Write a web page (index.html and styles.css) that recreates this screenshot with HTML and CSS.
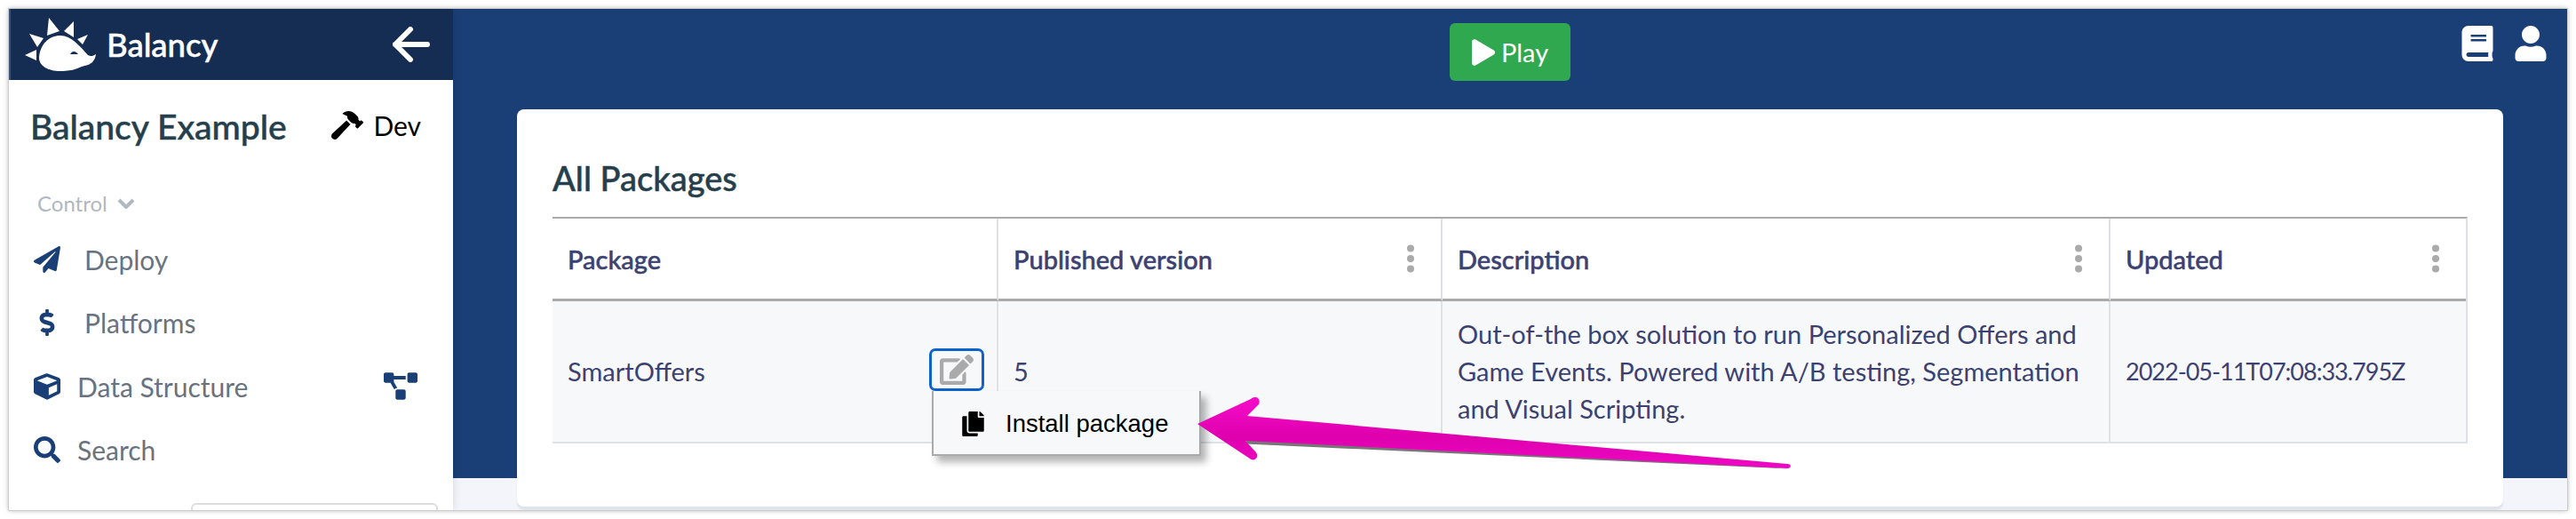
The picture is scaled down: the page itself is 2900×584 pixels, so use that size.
FILE: index.html
```html
<!DOCTYPE html>
<html lang="en">
<head>
    <meta charset="UTF-8">
    <title>Balancy - All Packages</title>
    <link rel="stylesheet" href="styles.css">
</head>
<body>
    <div class="window">
        <aside class="sidebar">
            <div class="brand">
                <svg class="logo" viewBox="28 18 80 60">
                    <path d="M55 18L67 33L53 38ZM83 22L83 40L72 33ZM99 37L93 48L87 42ZM33 36L49 41L42 51ZM28 60L41 54L41 66Z"/>
                    <path fill-rule="evenodd" d="M44 63C45 48 55 38 68 38C80 38 90 50 99 60C102 62 105 61 108 59C107 67 102 71 95 72C88 74 84 78 68 78C54 78 44 72 44 63ZM79 59C81 55 85 55 88 59Z"/>
                </svg>
                <span class="brand-name">Balancy</span>
                <svg class="back" viewBox="0 0 42 40"><path d="M20 3L3 20L20 37M3 20H39"/></svg>
            </div>
            <div class="project">
                <h2>Balancy Example</h2>
                <div class="env">
                    <svg class="icon-hammer" viewBox="0 0 576 512"><path d="M571.31 193.94l-22.63-22.63c-6.25-6.25-16.38-6.25-22.63 0l-11.31 11.31-28.9-28.9c5.63-21.31.36-44.9-16.35-61.61l-45.25-45.25c-62.48-62.48-163.79-62.48-226.28 0l90.51 45.25v18.75c0 16.97 6.74 33.25 18.75 45.25l49.14 49.14c16.71 16.71 40.3 21.98 61.61 16.35l28.9 28.9-11.31 11.31c-6.25 6.25-6.25 16.38 0 22.63l22.63 22.63c6.25 6.25 16.38 6.25 22.63 0l90.51-90.51c6.23-6.24 6.23-16.37-.01-22.62zm-286.72-15.2c-3.7-3.7-6.84-7.79-9.85-11.95L19.64 404.96c-25.57 23.88-26.26 64.19-1.53 88.93s65.05 24.05 88.93-1.53l238.13-255.07c-3.96-2.91-7.9-5.87-11.44-9.41l-49.14-49.14z"/></svg>
                    <span>Dev</span>
                </div>
            </div>
            <div class="nav-title">Control
                <svg class="chevron" viewBox="0 0 20 12"><path d="M2 2L10 10L18 2"/></svg>
            </div>
            <nav class="nav">
                <a class="nav-item">
                    <svg class="nav-icon" viewBox="0 0 512 512"><path d="M476 3.2L12.5 270.6c-18.1 10.4-15.8 35.6 2.2 43.2L121 358.4l287.3-253.2c5.5-4.9 13.3 2.6 8.6 8.3L176 407v80.5c0 23.6 28.5 32.9 42.5 15.8L282 426l124.6 52.2c14.2 6 30.4-2.9 33-18.2l72-432C515 7.8 493.3-6.8 476 3.2z"/></svg>
                    <span class="nav-label wide">Deploy</span>
                </a>
                <a class="nav-item">
                    <svg class="nav-icon" viewBox="-112 0 512 512"><path d="M209.2 233.4l-108-31.6C88.7 198.2 80 186.5 80 173.5c0-16.3 13.2-29.5 29.5-29.5h66.3c12.2 0 24.2 3.7 34.2 10.5 6.1 4.1 14.3 3.1 19.5-2l34.8-34c7.1-6.9 6.1-18.4-1.8-24.5C238 74.8 207.4 64.1 176 64V16c0-8.8-7.2-16-16-16h-32c-8.8 0-16 7.2-16 16v48h-2.5C45.8 64-5.4 118.7.5 183.6c4.2 46.1 39.4 83.6 83.8 96.6l102.5 30c12.5 3.7 21.2 15.3 21.2 28.3 0 16.3-13.2 29.5-29.5 29.5h-66.3C100 368 88 364.3 78 357.5c-6.1-4.1-14.3-3.1-19.5 2l-34.8 34c-7.1 6.9-6.1 18.4 1.8 24.5 24.5 19.2 55.1 29.9 86.5 30v48c0 8.8 7.2 16 16 16h32c8.8 0 16-7.2 16-16v-48.2c46.6-.9 90.3-28.6 105.7-72.7 21.5-61.6-14.6-124.8-72.5-141.7z"/></svg>
                    <span class="nav-label wide">Platforms</span>
                </a>
                <a class="nav-item">
                    <svg class="nav-icon" viewBox="0 0 512 512"><path d="M239.1 6.3l-208 78c-18.7 7-31.1 25-31.1 45v225.1c0 18.2 10.3 34.8 26.5 42.9l208 104c13.5 6.8 29.4 6.8 42.9 0l208-104c16.3-8.1 26.5-24.8 26.5-42.9V129.3c0-20-12.4-37.9-31.1-44.9l-208-78C262 2.2 250 2.2 239.1 6.3zM256 68.4l192 72v1.1l-192 78-192-78v-1.1l192-72zm32 356V275.5l160-65v133.9l-160 80z"/></svg>
                    <span class="nav-label">Data Structure</span>
                    <svg class="nav-extra" viewBox="0 0 640 512"><path d="M384 320H256c-17.67 0-32 14.33-32 32v128c0 17.67 14.33 32 32 32h128c17.67 0 32-14.33 32-32V352c0-17.67-14.33-32-32-32zM192 32c0-17.67-14.33-32-32-32H32C14.33 0 0 14.33 0 32v128c0 17.67 14.33 32 32 32h95.72l73.16 128.04C211.98 300.98 232.4 288 256 288h.28L192 175.51V128h224V64H192V32zM608 0H480c-17.67 0-32 14.33-32 32v128c0 17.67 14.33 32 32 32h128c17.67 0 32-14.33 32-32V32c0-17.67-14.33-32-32-32z"/></svg>
                </a>
                <a class="nav-item">
                    <svg class="nav-icon" viewBox="0 0 512 512"><path d="M505 442.7L405.3 343c-4.5-4.5-10.6-7-17-7H372c27.6-35.3 44-79.7 44-128C416 93.1 322.9 0 208 0S0 93.1 0 208s93.1 208 208 208c48.3 0 92.7-16.4 128-44v16.3c0 6.4 2.5 12.5 7 17l99.7 99.7c9.4 9.4 24.6 9.4 33.9 0l28.3-28.3c9.4-9.4 9.4-24.6.1-34zM208 336c-70.7 0-128-57.2-128-128 0-70.7 57.2-128 128-128 70.7 0 128 57.2 128 128 0 70.7-57.2 128-128 128z"/></svg>
                    <span class="nav-label">Search</span>
                </a>
            </nav>
            <div class="side-box"></div>
        </aside>

        <main class="main">
            <div class="topbar">
                <button class="play-btn">
                    <svg class="play-icon" viewBox="0 0 448 512"><path d="M424.4 214.7L72.4 6.6C43.8-10.3 0 6.1 0 47.9V464c0 37.5 40.7 60.1 72.4 41.3l352-208c31.4-18.5 31.5-64.1 0-82.6z"/></svg>
                    Play
                </button>
                <div class="top-icons">
                    <svg class="top-icon" viewBox="0 0 448 512"><path d="M448 360V24c0-13.3-10.7-24-24-24H96C43 0 0 43 0 96v320c0 53 43 96 96 96h328c13.3 0 24-10.7 24-24v-16c0-7.5-3.5-14.3-8.9-18.7-4.2-15.4-4.2-59.3 0-74.7 5.4-4.3 8.9-11.1 8.9-18.6zM128 134c0-3.3 2.7-6 6-6h212c3.3 0 6 2.7 6 6v20c0 3.3-2.7 6-6 6H134c-3.3 0-6-2.7-6-6v-20zm0 64c0-3.3 2.7-6 6-6h212c3.3 0 6 2.7 6 6v20c0 3.3-2.7 6-6 6H134c-3.3 0-6-2.7-6-6v-20zm253.4 250H96c-17.7 0-32-14.3-32-32 0-17.6 14.4-32 32-32h285.4c-1.9 17.1-1.9 46.9 0 64z"/></svg>
                    <svg class="top-icon" viewBox="0 0 448 512"><path d="M224 256c70.7 0 128-57.3 128-128S294.7 0 224 0 96 57.3 96 128s57.3 128 128 128zm89.6 32h-16.7c-22.2 10.2-46.9 16-72.9 16s-50.6-5.8-72.9-16h-16.7C60.2 288 0 348.2 0 422.4V464c0 26.5 21.5 48 48 48h352c26.5 0 48-21.5 48-48v-41.6c0-74.2-60.2-134.4-134.4-134.4z"/></svg>
                </div>
            </div>

            <section class="card">
                <h3>All Packages</h3>
                <div class="table">
                    <div class="th"><span>Package</span></div>
                    <div class="th"><span>Published version</span>
                        <svg class="kebab" viewBox="0 0 10 36"><circle cx="5" cy="5" r="4.5"/><circle cx="5" cy="18" r="4.5"/><circle cx="5" cy="31" r="4.5"/></svg>
                    </div>
                    <div class="th"><span>Description</span>
                        <svg class="kebab" viewBox="0 0 10 36"><circle cx="5" cy="5" r="4.5"/><circle cx="5" cy="18" r="4.5"/><circle cx="5" cy="31" r="4.5"/></svg>
                    </div>
                    <div class="th"><span>Updated</span>
                        <svg class="kebab" viewBox="0 0 10 36"><circle cx="5" cy="5" r="4.5"/><circle cx="5" cy="18" r="4.5"/><circle cx="5" cy="31" r="4.5"/></svg>
                    </div>

                    <div class="td name-cell">
                        <span>SmartOffers</span>
                        <div class="actions">
                            <button class="edit-btn">
                                <svg viewBox="0 0 576 512"><path d="M402.6 83.2l90.2 90.2c3.8 3.8 3.8 10 0 13.8L274.4 405.6l-92.8 10.3c-12.4 1.4-22.9-9.1-21.5-21.5l10.3-92.8L388.8 83.2c3.8-3.8 10-3.8 13.8 0zm162-22.9l-48.8-48.8c-15.2-15.2-39.9-15.2-55.2 0l-35.4 35.4c-3.8 3.8-3.8 10 0 13.8l90.2 90.2c3.8 3.8 10 3.8 13.8 0l35.4-35.4c15.2-15.3 15.2-40 0-55.2zM384 346.2V448H64V128h229.8c3.2 0 6.2-1.3 8.5-3.5l40-40c7.6-7.6 2.2-20.5-8.5-20.5H48C21.5 64 0 85.5 0 112v352c0 26.5 21.5 48 48 48h352c26.5 0 48-21.5 48-48V306.2c0-10.7-12.9-16-20.5-8.5l-40 40c-2.2 2.3-3.5 5.3-3.5 8.5z"/></svg>
                            </button>
                            <div class="menu">
                                <svg class="copy-icon" viewBox="0 0 448 512"><path d="M320 448v40c0 13.255-10.745 24-24 24H24c-13.255 0-24-10.745-24-24V120c0-13.255 10.745-24 24-24h72v296c0 30.879 25.121 56 56 56h168zm0-344V0H152c-13.255 0-24 10.745-24 24v368c0 13.255 10.745 24 24 24h272c13.255 0 24-10.745 24-24V128H344c-13.2 0-24-10.8-24-24zm120.971-31.029L375.029 7.029A24 24 0 0 0 358.059 0H352v96h96v-6.059a24 24 0 0 0-7.029-16.97z"/></svg>
                                <span>Install package</span>
                            </div>
                        </div>
                    </div>
                    <div class="td">5</div>
                    <div class="td">Out-of-the box solution to run Personalized Offers and Game Events. Powered with A/B testing, Segmentation and Visual Scripting.</div>
                    <div class="td date">2022-05-11T07:08:33.795Z</div>
                </div>
            </section>
        </main>

        <!-- screenshot annotation -->
        <svg class="callout" viewBox="10 10 2880 564">
            <defs>
                <linearGradient id="pink" x1="0" y1="0" x2="0" y2="1">
                    <stop offset="0" stop-color="#f70ccb"/>
                    <stop offset="0.55" stop-color="#de01ad"/>
                    <stop offset="1" stop-color="#ee08c4"/>
                </linearGradient>
            </defs>
            <path fill="#777" d="M1404 470L2015 526L1402 498Z" transform="translate(0 1.5)"/>
            <path fill="url(#pink)" d="M1348 477L1408 449C1414 444 1420 449 1417 455L1404 468L2012 522C2017 522 2017 527 2012 527L1402 496L1414 509C1418 515 1412 520 1407 516Z"/>
        </svg>
    </div>
</body>
</html>
```

FILE: styles.css
```css
/* General Styling */
body {
    margin: 0;
    background: #fff;
    font-family: 'Lato', sans-serif;
}

.window {
    position: relative;
    display: flex;
    height: 564px;
    margin: 10px;
    overflow: hidden;
    outline: 1px solid #ccc;
    box-shadow: 0 0 6px rgba(0, 0, 0, 0.35);
}

/* Sidebar */
.sidebar {
    position: relative;
    z-index: 1;
    flex: 0 0 500px;
    background: #fff;
    box-shadow: 0 0 10px rgba(0, 0, 0, 0.12);
}

.brand {
    display: flex;
    align-items: center;
    height: 80px;
    padding: 0 26px 0 16px;
    background: #152d53;
    border-left: 2px solid #3d5477;
    color: #fff;
}

.logo {
    width: 80px;
    height: 60px;
    fill: #fff;
}

.brand-name {
    margin-left: 12px;
    font-size: 36.5px;
    font-weight: 500;
    -webkit-text-stroke: 0.5px #fff;
}

.back {
    width: 42px;
    height: 40px;
    margin-left: auto;
    fill: none;
    stroke: #fff;
    stroke-width: 6;
    stroke-linecap: round;
    stroke-linejoin: round;
}

.project {
    display: flex;
    align-items: center;
    justify-content: space-between;
    padding: 26px 36px 0 24px;
    height: 52px;
}

.project h2 {
    margin: 0;
    font-size: 39px;
    font-weight: 500;
    color: #263f4d;
    -webkit-text-stroke: 0.5px #263f4d;
}

.env {
    display: flex;
    align-items: center;
    gap: 11px;
    margin-top: -2px;
    font-size: 30px;
    color: #000;
}

.icon-hammer {
    width: 36px;
    height: 32px;
}

.nav-title {
    display: flex;
    align-items: center;
    gap: 11px;
    margin: 46px 0 0 32px;
    font-size: 24px;
    color: #b0b8c1;
}

.chevron {
    width: 20px;
    height: 12px;
    fill: none;
    stroke: #b0b8c1;
    stroke-width: 4;
}

.nav {
    margin-top: 13px;
}

.nav-item {
    display: flex;
    align-items: center;
    height: 71.5px;
    padding: 0 40px 0 28px;
    font-size: 30px;
    color: #68737f;
}

.nav-icon {
    flex: none;
    width: 30px;
    height: 30px;
    fill: #1a3f76;
}

.nav-label {
    margin-left: 19px;
}

.nav-label.wide {
    margin-left: 27px;
}

.nav-extra {
    width: 38px;
    height: 31px;
    margin-left: auto;
    fill: #1a3f76;
}

.side-box {
    width: 274px;
    height: 30px;
    margin: 24px 0 0 205px;
    border: 2px solid #ddd;
    border-radius: 6px;
}

/* Main area */
.main {
    flex: 1;
    display: flex;
    flex-direction: column;
    background: linear-gradient(#1a3f76 528px, #f3f5fa 528px);
}

.topbar {
    position: relative;
    display: flex;
    justify-content: center;
    height: 113px;
    padding-top: 16px;
    box-sizing: border-box;
}

.play-btn {
    display: flex;
    align-items: center;
    justify-content: center;
    gap: 7px;
    width: 136px;
    height: 65px;
    border: none;
    border-radius: 6px;
    background: #2fa84f;
    color: #fff;
    font-family: inherit;
    font-size: 29px;
}

.play-icon {
    width: 26px;
    height: 30px;
    fill: #fff;
}

.top-icons {
    position: absolute;
    top: 19px;
    right: 23px;
    display: flex;
    gap: 24px;
}

.top-icon {
    width: 36px;
    height: 40px;
    fill: #fff;
}

.card {
    height: 447px;
    margin: 0 72px;
    padding: 0 40px;
    background: #fff;
    border-radius: 8px;
    box-shadow: 0 4px 2px rgba(50, 80, 120, 0.1);
}

.card h3 {
    margin: 0;
    padding-top: 54px;
    height: 67px;
    font-size: 38px;
    line-height: 46px;
    font-weight: 500;
    color: #263f4d;
    -webkit-text-stroke: 0.5px #263f4d;
}

/* Table */
.table {
    display: grid;
    grid-template-columns: 502px 500px 752px 400px;
    border-top: 2px solid #aaa;
    border-right: 2px solid #dee2e6;
    color: #3b4272;
    font-size: 29px;
}

.th {
    display: flex;
    align-items: center;
    justify-content: space-between;
    height: 90px;
    padding: 0 29px 0 17px;
    border-right: 2px solid #dee2e6;
    border-bottom: 3px solid #aaa;
    font-weight: 500;
    -webkit-text-stroke: 0.5px #3b4272;
}

.th:nth-child(4), .td:nth-child(8) {
    border-right: none;
}

.kebab {
    width: 10px;
    height: 32px;
    fill: #aaa;
}

.td {
    display: flex;
    align-items: center;
    height: 158px;
    padding: 0 17px;
    background: #f7f8fa;
    border-right: 2px solid #dee2e6;
    border-bottom: 2px solid #dee2e6;
    line-height: 42px;
}

.td.date {
    font-size: 27px;
    letter-spacing: -1px;
}

.name-cell {
    justify-content: space-between;
    padding-right: 14px;
}

.actions {
    position: relative;
    margin-top: -4px;
}

.edit-btn {
    display: flex;
    align-items: center;
    justify-content: center;
    width: 62px;
    height: 48px;
    padding: 0;
    background: transparent;
    border: 3px solid #0d63cc;
    border-radius: 7px;
}

.edit-btn svg {
    width: 38px;
    height: 34px;
    fill: #aaa;
}

.menu {
    position: absolute;
    z-index: 2;
    top: 100%;
    left: 3px;
    display: flex;
    align-items: center;
    gap: 24px;
    width: 303px;
    height: 73px;
    box-sizing: border-box;
    padding: 2px 0 0 32px;
    background: #f7f8fa;
    border: 2px solid #aaa;
    border-top: none;
    box-shadow: 6px 7px 8px rgba(0, 0, 0, 0.3);
    font-family: 'Liberation Sans', sans-serif;
    font-size: 27.5px;
    color: #000;
}

.copy-icon {
    width: 25px;
    height: 28px;
}

.callout {
    position: absolute;
    z-index: 3;
    top: 0;
    left: 0;
    width: 2880px;
    height: 564px;
    pointer-events: none;
}
```
